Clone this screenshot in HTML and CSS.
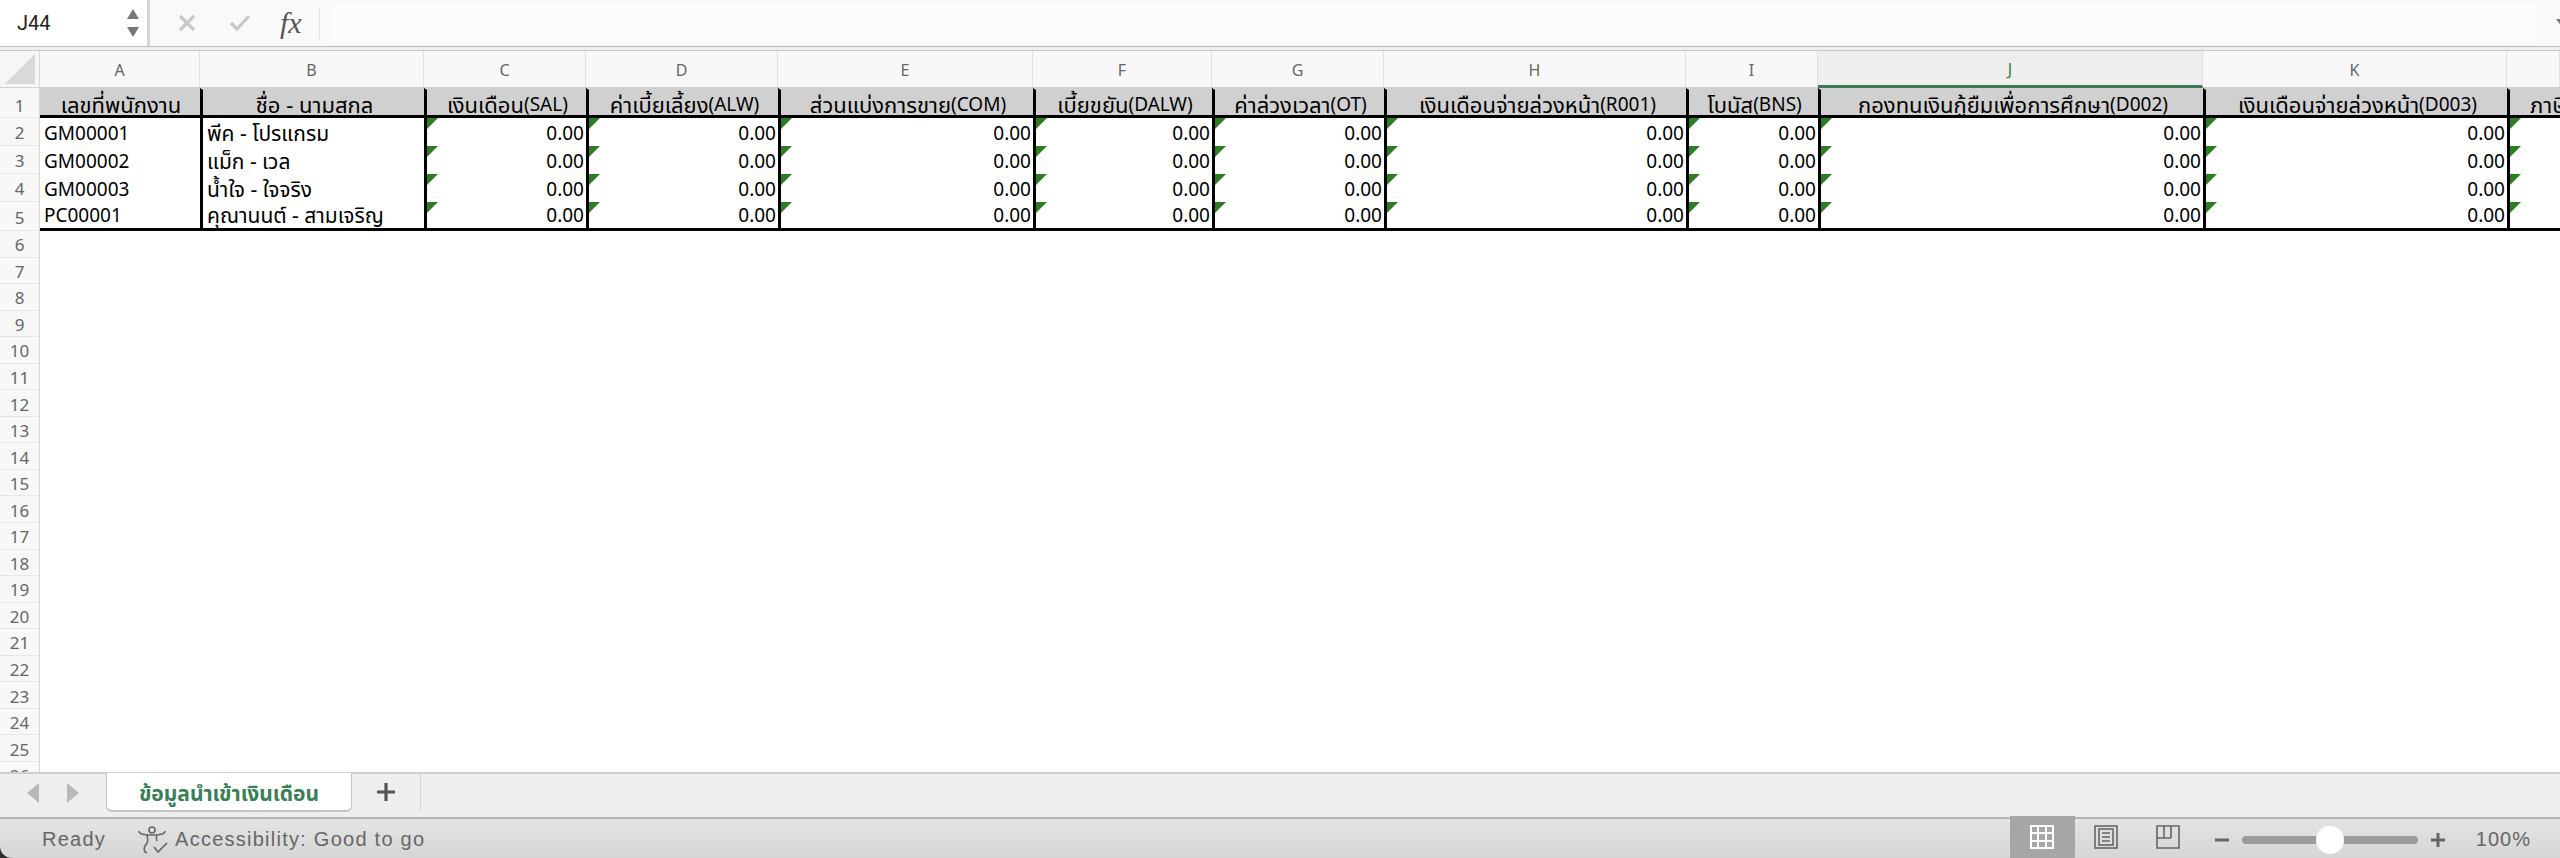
FILE: index.html
```html
<!DOCTYPE html>
<html lang="en">
<head>
    <meta charset="UTF-8">
    <title>Payroll import</title>
    <link rel="stylesheet" href="styles.css">
</head>
<body>
    <div class="app">
        <!-- Formula Bar -->
        <div class="formula-bar">
            <div class="name-box">
                <span class="name-value">J44</span>
                <svg class="name-arrows" width="14" height="30" viewBox="0 0 14 30">
                    <path d="M7 1 L13 11 L1 11 Z M1 19 L13 19 L7 29 Z" fill="#777"/>
                </svg>
            </div>
            <div class="formula-tools">
                <svg width="18" height="18" viewBox="0 0 18 18"><path d="M2 2 L16 16 M16 2 L2 16" stroke="#c9c9c9" stroke-width="3.4" fill="none"/></svg>
                <svg width="22" height="18" viewBox="0 0 22 18"><path d="M2 9 L8 15 L20 2" stroke="#c9c9c9" stroke-width="3.2" fill="none"/></svg>
                <span class="fx">fx</span>
            </div>
            <div class="formula-input"></div>
            <svg class="formula-caret" width="14" height="9" viewBox="0 0 14 9"><path d="M0 0 L14 0 L7 9 Z" fill="#777"/></svg>
        </div>
        <div class="bar-gap"></div>

        <!-- Sheet -->
        <div class="sheet">
            <div class="grid">
                <div class="corner"><svg width="30" height="30" viewBox="0 0 30 30"><path d="M30 0 L30 30 L0 30 Z" fill="#d9d9d9"/></svg></div>
                <div class="col">A</div><div class="col">B</div><div class="col">C</div><div class="col">D</div>
                <div class="col">E</div><div class="col">F</div><div class="col">G</div><div class="col">H</div>
                <div class="col">I</div><div class="col col-active">J</div><div class="col">K</div><div class="col"></div>

                <div class="row-num row-head">1</div>
                <div class="cell head first">เลขที่พนักงาน</div>
                <div class="cell head">ชื่อ - นามสกุล</div>
                <div class="cell head">เงินเดือน<span class="lat">(SAL)</span></div>
                <div class="cell head">ค่าเบี้ยเลี้ยง<span class="lat">(ALW)</span></div>
                <div class="cell head">ส่วนแบ่งการขาย<span class="lat">(COM)</span></div>
                <div class="cell head">เบี้ยขยัน<span class="lat">(DALW)</span></div>
                <div class="cell head">ค่าล่วงเวลา<span class="lat">(OT)</span></div>
                <div class="cell head">เงินเดือนจ่ายล่วงหน้า<span class="lat">(R001)</span></div>
                <div class="cell head">โบนัส<span class="lat">(BNS)</span></div>
                <div class="cell head">กองทุนเงินกู้ยืมเพื่อการศึกษา<span class="lat">(D002)</span></div>
                <div class="cell head">เงินเดือนจ่ายล่วงหน้า<span class="lat">(D003)</span></div>
                <div class="cell head cut">ภาษี</div>

                <div class="row-num">2</div>
                <div class="cell first">GM00001</div><div class="cell thai">พีค - โปรแกรม</div>
                <div class="cell num">0.00</div><div class="cell num">0.00</div><div class="cell num">0.00</div><div class="cell num">0.00</div><div class="cell num">0.00</div>
                <div class="cell num">0.00</div><div class="cell num">0.00</div><div class="cell num">0.00</div><div class="cell num">0.00</div><div class="cell num"></div>

                <div class="row-num">3</div>
                <div class="cell first">GM00002</div><div class="cell thai">แม็ก - เวล</div>
                <div class="cell num">0.00</div><div class="cell num">0.00</div><div class="cell num">0.00</div><div class="cell num">0.00</div><div class="cell num">0.00</div>
                <div class="cell num">0.00</div><div class="cell num">0.00</div><div class="cell num">0.00</div><div class="cell num">0.00</div><div class="cell num"></div>

                <div class="row-num">4</div>
                <div class="cell first">GM00003</div><div class="cell thai">น้ำใจ - ใจจริง</div>
                <div class="cell num">0.00</div><div class="cell num">0.00</div><div class="cell num">0.00</div><div class="cell num">0.00</div><div class="cell num">0.00</div>
                <div class="cell num">0.00</div><div class="cell num">0.00</div><div class="cell num">0.00</div><div class="cell num">0.00</div><div class="cell num"></div>

                <div class="row-num">5</div>
                <div class="cell first last">PC00001</div><div class="cell thai last">คุณานนต์ - สามเจริญ</div>
                <div class="cell num last">0.00</div><div class="cell num last">0.00</div><div class="cell num last">0.00</div><div class="cell num last">0.00</div><div class="cell num last">0.00</div>
                <div class="cell num last">0.00</div><div class="cell num last">0.00</div><div class="cell num last">0.00</div><div class="cell num last">0.00</div><div class="cell num last"></div>

                <div class="row-num">6</div><div class="row-num">7</div><div class="row-num">8</div><div class="row-num">9</div>
                <div class="row-num">10</div><div class="row-num">11</div><div class="row-num">12</div><div class="row-num">13</div>
                <div class="row-num">14</div><div class="row-num">15</div><div class="row-num">16</div><div class="row-num">17</div>
                <div class="row-num">18</div><div class="row-num">19</div><div class="row-num">20</div><div class="row-num">21</div>
                <div class="row-num">22</div><div class="row-num">23</div><div class="row-num">24</div><div class="row-num">25</div>
                <div class="row-num">26</div>
            </div>
        </div>

        <!-- Sheet Tabs -->
        <div class="tab-bar">
            <div class="tab-nav">
                <svg width="14" height="22" viewBox="0 0 14 22"><path d="M13 1 L13 21 L1 11 Z" fill="#b9b9b9"/></svg>
                <svg width="14" height="22" viewBox="0 0 14 22"><path d="M1 1 L1 21 L13 11 Z" fill="#b9b9b9"/></svg>
            </div>
            <div class="tab">ข้อมูลนำเข้าเงินเดือน</div>
            <div class="tab-add">
                <svg width="20" height="20" viewBox="0 0 20 20"><path d="M10 1 L10 19 M1 10 L19 10" stroke="#555" stroke-width="3.2"/></svg>
            </div>
        </div>

        <!-- Status Bar -->
        <div class="status-bar">
            <span class="status-ready">Ready</span>
            <svg class="a11y-icon" width="30" height="28" viewBox="0 0 30 28" fill="none" stroke="#666" stroke-width="1.6">
                <circle cx="14" cy="4" r="3"/>
                <path d="M1 5 C1 9 6 8 9 9 H19 C22 8 27 9 27 5 M9 9 C10 13 10 15 9 17 C7 20 5 22 7 26 L9 27 M19 9 C18 11 18 13 19 15"/>
                <path d="M16 21 L20 26 L29 17"/>
            </svg>
            <span class="status-a11y">Accessibility: Good to go</span>
            <div class="status-right">
                <div class="view-btn view-active">
                    <svg width="24" height="24" viewBox="0 0 24 24">
                        <path d="M1 1 H23 V23 H1 Z M8 1 V23 M16 1 V23 M1 8 H23 M1 16 H23" fill="none" stroke="#fff" stroke-width="2"/>
                    </svg>
                </div>
                <div class="view-btn">
                    <svg width="24" height="24" viewBox="0 0 24 24" fill="none" stroke="#666" stroke-width="1.6">
                        <rect x="1" y="1" width="22" height="22"/>
                        <rect x="5" y="4" width="14" height="16"/>
                        <path d="M8 8 H16 M8 12 H16 M8 16 H16"/>
                    </svg>
                </div>
                <div class="view-btn">
                    <svg width="24" height="24" viewBox="0 0 24 24" fill="none" stroke="#666" stroke-width="1.6">
                        <path d="M1 1 H23 V23 H1 Z M8 1 V13 M15 1 V13 M1 13 H15"/>
                    </svg>
                </div>
                <svg class="zoom-sign" width="14" height="14" viewBox="0 0 14 14"><path d="M0 7 H14" stroke="#666" stroke-width="3"/></svg>
                <div class="zoom-track"><div class="zoom-knob"></div></div>
                <svg class="zoom-sign" width="14" height="14" viewBox="0 0 14 14"><path d="M0 7 H14 M7 0 V14" stroke="#666" stroke-width="3"/></svg>
                <span class="zoom-value">100%</span>
            </div>
        </div>
    </div>
</body>
</html>
```
FILE: styles.css
```css
/* Base Styles */
* {
    margin: 0;
    padding: 0;
    box-sizing: border-box;
}

body {
    background-color: #2e2e2e;
    font-family: 'Noto Sans', 'Noto Sans Thai', sans-serif;
    color: #000;
}

.app {
    display: flex;
    flex-direction: column;
    height: 100vh;
    overflow: hidden;
}

/* Formula Bar */
.formula-bar {
    display: flex;
    align-items: center;
    height: 46px;
    background: #f9f9f9;
    flex-shrink: 0;
}

.name-box {
    display: flex;
    align-items: center;
    justify-content: space-between;
    width: 150px;
    height: 46px;
    padding: 0 7px 0 17px;
    background: #fff;
    border-right: 3px solid #d5d5d5;
}

.name-value {
    font-family: Roboto, sans-serif;
    font-size: 20px;
    color: #222;
}

.formula-tools {
    display: flex;
    align-items: center;
    gap: 33px;
    width: 170px;
    height: 32px;
    padding-left: 28px;
    border-right: 1px solid #e2e2e2;
}

.fx {
    font-family: 'Liberation Serif', serif;
    font-style: italic;
    font-size: 30px;
    color: #555;
    margin-left: -4px;
}

.formula-input {
    flex-grow: 1;
    height: 38px;
    margin: 0 21px 0 10px;
    background: #fcfcfc;
}

.formula-caret {
    flex-shrink: 0;
    margin-right: -10px;
}

.bar-gap {
    height: 5px;
    flex-shrink: 0;
    background: #efefef;
    border-top: 1px solid #bdbdbd;
    border-bottom: 1px solid #c8c8c8;
}

/* Sheet */
.sheet {
    flex: 1;
    min-height: 0;
    overflow: hidden;
    background: #fff;
}

.grid {
    display: grid;
    grid-template-columns: 40px 160px 224px 162px 192px 255px 179px 172px 302px 132px 385px 304px 53px;
    grid-template-rows: 37px 30px 28px 28px 28px 29px;
    grid-auto-rows: 26.55px;
    width: 2560px;
}

.corner {
    display: flex;
    align-items: flex-end;
    justify-content: flex-end;
    padding: 0 4px 3px 0;
    background: #f6f6f6;
    border-right: 1px solid #d9d9d9;
    border-bottom: 1px solid #d0d0d0;
}

.col {
    display: flex;
    align-items: center;
    justify-content: center;
    padding-top: 2px;
    font-size: 16px;
    color: #666;
    background: #f8f8f8;
    border-right: 1px solid #e0e0e0;
    border-bottom: 1px solid #d0d0d0;
}

.col-active {
    background: #eeeeee;
    color: #2f7a4f;
    border-bottom: 3px solid #3d7a54;
}

.row-num {
    grid-column: 1;
    display: flex;
    align-items: center;
    justify-content: center;
    padding-top: 2px;
    font-size: 17px;
    color: #666;
    background: #f8f8f8;
    border-right: 1px solid #d6d6d6;
    border-bottom: 1px solid #e6e6e6;
}

.row-head {
    padding-top: 5px;
}

.cell {
    position: relative;
    display: flex;
    align-items: flex-end;
    padding: 0 2px 0 4px;
    font-size: 19px;
    line-height: 26px;
    white-space: nowrap;
    border-left: 3px solid #000;
}

.cell.first {
    border-left: none;
}

.cell.thai {
    font-size: 21px;
}

.cell.head {
    justify-content: center;
    align-items: center;
    padding-top: 3px;
    font-size: 22px;
    background: #d0d0d0;
    border-top: 2px solid #d0d0d0;
    border-bottom: 3px solid #000;
    overflow: hidden;
}

.cell.head.cut {
    justify-content: flex-start;
    padding-left: 20px;
}

.lat {
    font-size: 19px;
}

.cell.last {
    border-bottom: 3px solid #000;
}

.cell.num {
    justify-content: flex-end;
}

/* Green error corner */
.cell.num::before {
    content: "";
    position: absolute;
    top: 0;
    left: 0;
    width: 11px;
    height: 11px;
    background: #2e7d22;
    clip-path: polygon(0 0, 100% 0, 0 100%);
}

/* Sheet Tabs */
.tab-bar {
    display: flex;
    align-items: flex-start;
    height: 45px;
    flex-shrink: 0;
    background: #eeeeee;
    border-top: 2px solid #cfcfcf;
}

.tab-nav {
    display: flex;
    align-items: center;
    justify-content: space-between;
    width: 106px;
    height: 38px;
    padding: 0 26px;
}

.tab {
    display: flex;
    align-items: center;
    justify-content: center;
    width: 246px;
    height: 39px;
    margin-top: -1px;
    padding-top: 5px;
    font-size: 21px;
    font-weight: 700;
    color: #3a8056;
    background: #fff;
    border: 1px solid #c4c4c4;
    border-top: none;
    border-bottom-width: 2px;
    border-radius: 0 0 6px 6px;
}

.tab-add {
    display: flex;
    align-items: center;
    justify-content: center;
    width: 69px;
    height: 36px;
    border-right: 1px solid #d2d2d2;
}

/* Status Bar */
.status-bar {
    display: flex;
    align-items: center;
    height: 41px;
    flex-shrink: 0;
    padding: 2px 0 0 42px;
    font-family: 'Liberation Sans', sans-serif;
    font-size: 20px;
    letter-spacing: 1.25px;
    color: #666;
    background: linear-gradient(#e4e4e4, #d6d6d6);
    border-top: 2px solid #b4b4b4;
    border-bottom-left-radius: 12px;
}

.a11y-icon {
    margin: 0 7px 0 32px;
}

.status-right {
    display: flex;
    align-items: center;
    align-self: stretch;
    margin-left: auto;
    padding-right: 29px;
}

.view-btn {
    display: flex;
    align-items: center;
    justify-content: center;
    width: 62px;
    margin-top: -5px;
    height: calc(100% + 5px);
}

.view-active {
    width: 65px;
    background: #a6a6a6;
}

.zoom-sign {
    margin-left: 16px;
}

.zoom-track {
    position: relative;
    width: 176px;
    height: 8px;
    margin: 0 0 0 13px;
    background: #9c9c9c;
    border-radius: 4px;
}

.zoom-knob {
    position: absolute;
    top: -10px;
    left: 74px;
    width: 28px;
    height: 28px;
    background: #fff;
    border-radius: 50%;
}

.status-right .zoom-sign:last-of-type {
    margin-left: 13px;
}

.zoom-value {
    margin-left: 31px;
    letter-spacing: 1px;
}
```
